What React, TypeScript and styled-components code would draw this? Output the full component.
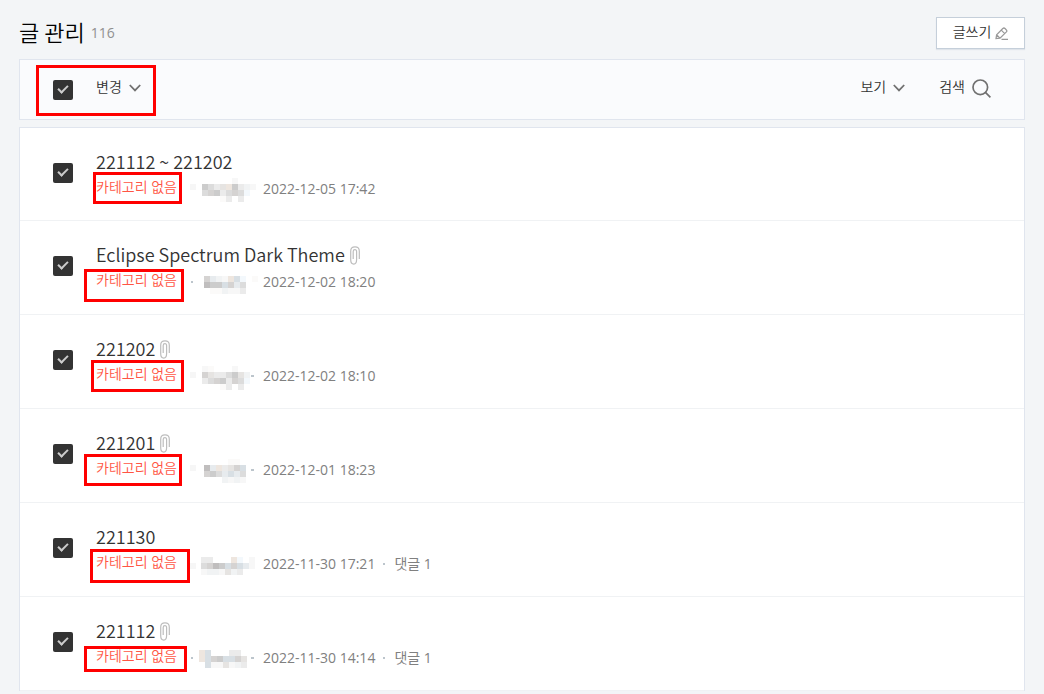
import React from "react";
import styled, { createGlobalStyle } from "styled-components";

const Global = createGlobalStyle`
  *, *::before, *::after { box-sizing: border-box; }
  body {
    margin: 0;
    background: #f3f5f7;
    color: #333;
    font-family: "Open Sans", "Noto Sans CJK KR", sans-serif;
  }
  button, input { font: inherit; color: inherit; margin: 0; }
  h1, h2, ul, p { margin: 0; padding: 0; font-weight: 400; }
`;

const Page = styled.main`
  padding: 17px 19px 0 19px;
`;

const Header = styled.header`
  display: flex;
  justify-content: space-between;
  align-items: flex-start;
  height: 42px;
`;

const Heading = styled.div`
  display: flex;
  align-items: center;
  gap: 6px;
  height: 32px;
`;

const Title = styled.h1`
  padding-bottom: 4px;
  font-family: "Noto Sans CJK KR", sans-serif;
  font-size: 22px;
  font-weight: 350;
  line-height: 28px;
  color: #000;
`;

const Total = styled.span`
  font-size: 14px;
  line-height: 32px;
  color: #909090;
`;

const Label = styled.span`
  padding-bottom: 4px;
  font-family: "Noto Sans CJK KR", sans-serif;
  font-size: 14px;
  font-weight: 350;
  line-height: 20px;
`;

const WriteButton = styled.button`
  display: flex;
  align-items: center;
  justify-content: center;
  gap: 4px;
  width: 89px;
  height: 32px;
  padding: 0;
  border: 1px solid #c5cfda;
  background: #fff;
  box-shadow: 0 1px 1px #dfe4ea;
`;

const Toolbar = styled.div`
  position: relative;
  display: flex;
  align-items: center;
  height: 61px;
  padding: 0 33px;
  border: 1px solid #e0e5ee;
  background: #fafbfd;
`;

const ToolButton = styled.button`
  display: flex;
  align-items: center;
  gap: 7px;
  padding: 0 0 3px;
  border: 0;
  background: none;
`;

const ToolEnd = styled.div`
  display: flex;
  gap: 34px;
  margin-left: auto;
`;

const Check = styled.input`
  appearance: none;
  flex: none;
  width: 20px;
  height: 20px;
  margin-right: 23px;
  border-radius: 2px;
  background: #333;
  display: grid;
  place-items: center;
  &:checked::after {
    content: "";
    width: 6px;
    height: 10px;
    border: solid #ccc;
    border-width: 0 2px 2px 0;
    transform: translateY(-2px) rotate(45deg);
  }
`;

const List = styled.ul`
  margin-top: 7px;
  list-style: none;
`;

const Row = styled.li`
  position: relative;
  display: flex;
  align-items: center;
  height: 94px;
  padding: 0 33px;
  border: solid #e0e5ee;
  border-width: 0 1px;
  background: #fff;
  box-shadow: inset 0 -1px #f0f2f4;
  &:first-child { border-top-width: 1px; }
  ${Check} { margin-bottom: 4px; }
`;

const Post = styled.div`
  padding-bottom: 1px;
`;

const PostTitle = styled.h2`
  display: flex;
  align-items: center;
  gap: 5px;
  padding-bottom: 2px;
  font-family: "Noto Sans CJK KR", sans-serif;
  font-size: 18px;
  font-weight: 350;
  line-height: 26px;
  svg { margin-top: 3px; }
`;

const Meta = styled.p`
  display: flex;
  align-items: flex-start;
  margin-top: 1px;
  font-size: 14px;
  line-height: 24px;
  color: #808080;
`;

const Category = styled.span`
  width: 94px;
  font-weight: 350;
  line-height: 20px;
  color: #ff5544;
`;

const AuthorArt = styled.svg`
  width: 66px;
  height: 24px;
  margin-right: 7px;
  overflow: visible;
`;

const Comments = styled.span`
  display: flex;
  align-items: center;
  gap: 9px;
  margin-left: 8px;
  &::before {
    content: "";
    width: 2px;
    height: 2px;
    background: #bcc5cc;
  }
`;

const Mark = styled.div<{ $x: number; $y: number; $w: number; $h: number }>`
  position: absolute;
  left: ${(p) => p.$x}px;
  top: ${(p) => p.$y}px;
  width: ${(p) => p.$w}px;
  height: ${(p) => p.$h}px;
  border: 3px solid #f00;
  pointer-events: none;
`;

const Chevron = () => (
  <svg width="12" height="8" viewBox="0 0 12 8" fill="none" stroke="#707070" strokeWidth="1.8" aria-hidden>
    <path d="M.8 1 6 6.4 11.2 1" />
  </svg>
);

const Search = () => (
  <svg width="19" height="19" viewBox="0 0 19 19" fill="none" stroke="#707070" strokeWidth="1.7" aria-hidden>
    <circle cx="8.3" cy="8.3" r="7.3" />
    <path d="m13.4 13.4 5 5" />
  </svg>
);

const Pen = () => (
  <svg width="13" height="13" viewBox="0 0 13 13" fill="none" stroke="#999" strokeWidth="1.2" aria-hidden>
    <path d="M1 11.6 1.6 7.8 7.8 1.5Q9 .5 10 1.5L11.4 3q.9.9 0 1.9L5 11.1Z M6.3 3.2l3.4 3.4M1.6 7.8 5 11.1M6.5 12.4H13" />
  </svg>
);

const Clip = () => (
  <svg width="10" height="19" viewBox="0 0 10 19" fill="none" stroke="#bdbdbd" strokeWidth="1.2" role="img" aria-label="첨부파일">
    <path d="M3.2 13V5.4Q3.2 3.6 4.9 3.6T6.6 5.4V13.6M9.3 13V5.2Q9.3.8 5 .8T.7 5.2V13.5Q.7 18.1 3.8 18.1 6.6 18.1 6.6 13.6" />
  </svg>
);

interface Mosaic {
  x: number;
  y: number;
  rows: string[];
  left?: "dot" | "faint";
  right?: boolean;
}

/* Each cell is one key of this palette; a dash leaves the cell empty. */
const shades: Record<string, string> = {
  "1": "#c0bebe", "2": "#cccccc", "3": "#d5d3d2", "4": "#dcdcdc", "5": "#d8dfe4",
  "6": "#e6e4e2", "7": "#ebebeb", "8": "#e7ebee", "9": "#f1f3f4", a: "#f3f8fc",
  b: "#eee6df", c: "#f7f7f7", d: "#fbfaf9",
};

const Author = ({ art }: { art: Mosaic }) => (
  <AuthorArt viewBox="0 0 66 24" shapeRendering="crispEdges" aria-hidden>
    {art.left === "dot" && <rect x="1" y="11" width="2" height="2" fill="#bcc5cc" />}
    {art.left === "faint" && <rect x="0" y={art.y} width="6" height="6" fill="#f6f6f6" />}
    {art.rows.map((row, r) =>
      [...row].map((cell, c) =>
        cell === "-" ? null : (
          <rect key={`${r}-${c}`} x={art.x + c * 6} y={art.y + (r - 1) * 6} width="6" height="6" fill={shades[cell]} />
        ),
      ),
    )}
    {art.right && <rect x="61" y="11" width="3" height="2" fill="#bcc5cc" />}
  </AuthorArt>
);

interface PostData {
  title: string;
  date: string;
  clip?: boolean;
  comments?: number;
  mark: [number, number, number, number];
  author: Mosaic;
}

const posts: PostData[] = [
  {
    title: "221112 ~ 221202", date: "2022-12-05 17:42", mark: [73, 44, 89, 32],
    author: { x: 12, y: 7, left: "faint", rows: ["-----c", "2476b279c", "4327434a", "---d7-7"] },
  },
  {
    title: "Eclipse Spectrum Dark Theme", date: "2022-12-02 18:20", clip: true, mark: [64, 48, 100, 33],
    author: { x: 14, y: 6, left: "dot", rows: ["", "389cb5a-d", "1225384", "-dd9cc7"] },
  },
  {
    title: "221202", date: "2022-12-02 18:10", clip: true, mark: [71, 45, 93, 32],
    author: { x: 12, y: 8, left: "faint", right: true, rows: ["cd---c", "36774269", "7432734a", "---d7-7"] },
  },
  {
    title: "221201", date: "2022-12-01 18:23", clip: true, mark: [64, 45, 98, 32],
    author: { x: 14, y: 7, left: "faint", right: true, rows: ["----dd", "18b7635", "3248584", "---9c9c"] },
  },
  {
    title: "221130", date: "2022-11-30 17:21", comments: 1, mark: [70, 46, 100, 34],
    author: { x: 11, y: 11, left: "faint", rows: ["77---ba-c", "43125358c", "c99c697"] },
  },
  {
    title: "221112", date: "2022-11-30 14:14", clip: true, comments: 1, mark: [64, 49, 103, 26],
    author: { x: 9, y: 10, left: "dot", right: true, rows: ["b5---77", "b5325536", "-5cc6c97"] },
  },
];

export default function App() {
  return (
    <Page>
      <Global />
      <Header>
        <Heading>
          <Title>글 관리</Title>
          <Total>116</Total>
        </Heading>
        <WriteButton type="button"><Label>글쓰기</Label><Pen /></WriteButton>
      </Header>
      <Toolbar>
        <Check type="checkbox" defaultChecked aria-label="전체 선택" />
        <ToolButton type="button"><Label>변경</Label><Chevron /></ToolButton>
        <ToolEnd>
          <ToolButton type="button"><Label>보기</Label><Chevron /></ToolButton>
          <ToolButton type="button"><Label>검색</Label><Search /></ToolButton>
        </ToolEnd>
        <Mark $x={16} $y={5} $w={120} $h={51} />
      </Toolbar>
      <List>
        {posts.map((p) => (
          <Row key={p.title}>
            <Check type="checkbox" defaultChecked aria-label={p.title} />
            <Post>
              <PostTitle>{p.title}{p.clip && <Clip />}</PostTitle>
              <Meta>
                <Category>카테고리 없음</Category>
                <Author art={p.author} />
                <span>{p.date}</span>
                {p.comments && <Comments>댓글 {p.comments}</Comments>}
              </Meta>
            </Post>
            <Mark $x={p.mark[0]} $y={p.mark[1]} $w={p.mark[2]} $h={p.mark[3]} />
          </Row>
        ))}
      </List>
    </Page>
  );
}
